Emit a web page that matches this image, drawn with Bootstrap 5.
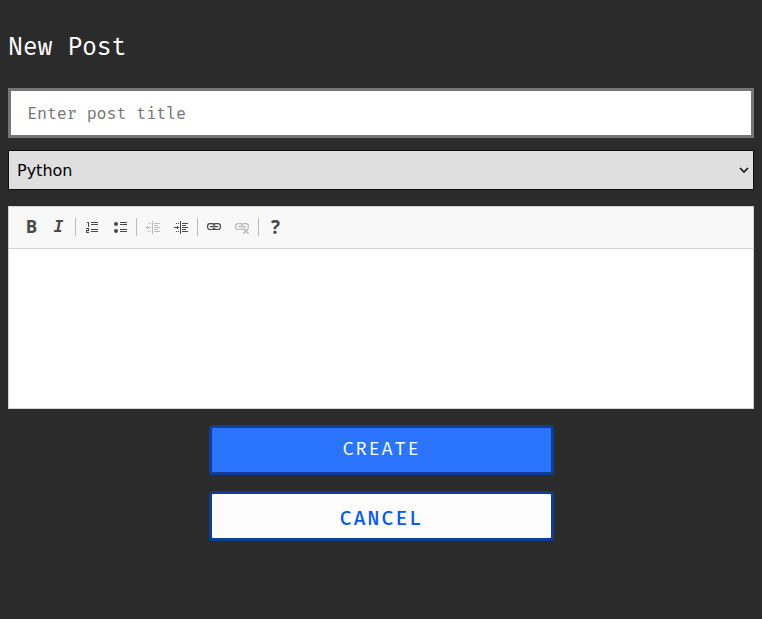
<!DOCTYPE html>
<html lang="en">
<head>
<meta charset="utf-8">
<meta name="viewport" content="width=device-width, initial-scale=1">
<title>New Post</title>
<link href="https://cdn.jsdelivr.net/npm/bootstrap@5.3.0/dist/css/bootstrap.min.css" rel="stylesheet">
<style>
body{background:#2b2b2b;font-family:"Fira Mono","Fira Code","DejaVu Sans Mono",monospace;overflow:hidden}
.page-title{font-size:25px;line-height:32px;letter-spacing:-.2px;margin:31px 0 25px;font-weight:400}
.post-title{height:50px;border:3px solid #767676;padding:0 16px;font-size:16.8px;letter-spacing:-.13px}
.post-title,.post-title:focus{background:#fff}
.post-title::placeholder{color:#757575}
.lang-select{height:40px;margin-top:12px;border:1px solid #0d0d0d;background-color:#dfdfdf;color:#000;font:16px "DejaVu Sans",sans-serif;padding:0 24px 0 8px;background-image:url("data:image/svg+xml,%3Csvg xmlns='http://www.w3.org/2000/svg' viewBox='0 0 10 6'%3E%3Cpath d='M1 1l4 4 4-4' fill='none' stroke='%23111' stroke-width='1.6'/%3E%3C/svg%3E");background-size:10px 6px;background-position:right 4px center}
.editor{margin-top:16px;height:203px;border:1px solid #d1d1d1}
.editor-bar{height:42px;background:#f8f8f8;border-bottom:1px solid #d1d1d1;padding:0 9px 2px}
.tool{width:28px;height:28px;color:#484848;background:none;border:0}
.tool.narrow{width:27px}
.tool svg{width:16px;height:16px;display:block}
.tool.off{opacity:.35}
.tool-sep{width:1px;height:18px;background:#bcbcbc;margin:0 2px}
.tool-sep.first{margin-left:3px}
.tool-b{font:bold 17px/16px "Open Sans",sans-serif}
.tool-i{font:italic bold 16px/16px "DejaVu Sans Mono",monospace}
.tool-q{font:bold 19px/18px "Open Sans",sans-serif;padding-left:1px!important}
.act{width:345px;height:50px;border:3px solid #0d3f98;border-radius:4px;padding:0;margin-left:1px;text-transform:uppercase}
.act-create,.act-create:hover{background:#2a74ff;color:#fff;border-color:#0d3f98;font-size:18.7px;letter-spacing:1.75px;padding-bottom:1px}
.act-cancel,.act-cancel:hover{background:#fdfdfd;color:#0458fb;border-color:#0d3f98;font-size:19.5px;letter-spacing:2.2px;font-weight:450;padding:6px 0 0}
</style>
</head>
<body>
<main class="px-2 pt-0 d-flex flex-column">
  <h1 class="page-title text-white">New Post</h1>
  <input class="form-control rounded-0 post-title" type="text" placeholder="Enter post title">
  <select class="form-select rounded-0 lang-select"><option>Python</option></select>
  <section class="editor bg-white">
    <div class="editor-bar d-flex align-items-center">
      <button class="tool narrow p-0 tool-b">B</button>
      <button class="tool narrow p-0 tool-i">I</button>
      <span class="tool-sep first"></span>
      <button class="tool p-0 d-flex align-items-center justify-content-center" aria-label="Numbered list"><svg viewBox="0 0 16 16" fill="currentColor" shape-rendering="crispEdges"><path d="M7 3h7v1H7zM7 5h7v1H7zM7 10h7v1H7zM7 12h7v1H7zM3 3h2v5H4V4H3zM2 9h3v3H3v1h2v1H2v-3h2v-1H2z"/></svg></button>
      <button class="tool p-0 d-flex align-items-center justify-content-center" aria-label="Bulleted list"><svg viewBox="0 0 16 16" fill="currentColor"><circle cx="4" cy="5" r="2"/><circle cx="4" cy="12" r="2"/><path d="M8 3h7v1H8zM8 5h7v1H8zM8 10h7v1H8zM8 12h7v1H8z"/></svg></button>
      <span class="tool-sep"></span>
      <button class="tool off p-0 d-flex align-items-center justify-content-center" aria-label="Decrease indent"><svg viewBox="0 0 16 16" fill="currentColor" shape-rendering="crispEdges"><path d="M7 2h1v13H7zM9 4h6v1H9zM9 6h4v1H9zM9 8h6v1H9zM9 10h4v1H9zM9 12h6v1H9zM3 4h1v1H3zM5 4h1v1H5zM3 12h1v1H3zM5 12h1v1H5zM1 8h5v1H1zM2 7h1v3H2z"/></svg></button>
      <button class="tool p-0 d-flex align-items-center justify-content-center" aria-label="Increase indent"><svg viewBox="0 0 16 16" fill="currentColor" shape-rendering="crispEdges"><path d="M7 2h1v13H7zM9 4h6v1H9zM9 6h4v1H9zM9 8h6v1H9zM9 10h4v1H9zM9 12h6v1H9zM3 4h1v1H3zM5 4h1v1H5zM3 12h1v1H3zM5 12h1v1H5zM1 8h5v1H1zM4 7h1v3H4z"/></svg></button>
      <span class="tool-sep"></span>
      <button class="tool p-0 d-flex align-items-center justify-content-center" aria-label="Link"><svg viewBox="0 0 16 16" fill="none" stroke="currentColor" stroke-width="1.2"><path d="M9 6.500Q8.600 4.700 6.600 4.700H4a2.500 2.500 0 0 0-2.400 2.500v1A2.500 2.500 0 0 0 4 10.500h2.600Q8.600 10.500 9 9M7 6.500Q7.400 4.700 9.400 4.700H12a2.500 2.500 0 0 1 2.400 2.500v1a2.500 2.500 0 0 1-2.400 2.300H9.400Q7.400 10.500 7 9M4 7.600h8"/></svg></button>
      <button class="tool off p-0 d-flex align-items-center justify-content-center" aria-label="Unlink"><svg viewBox="0 0 16 16" fill="none" stroke="currentColor" stroke-width="1.2"><path d="M9 6.500Q8.600 4.700 6.600 4.700H4a2.500 2.500 0 0 0-2.400 2.500v1A2.500 2.500 0 0 0 4 10.500h2.600Q8.600 10.500 9 9M7 6.500Q7.400 4.700 9.400 4.700H12a2.500 2.500 0 0 1 2.400 2.500v1.500M4 7.600h8"/><path stroke-width="1.700" d="M9.500 9.500l5 5m0-5-5 5"/></svg></button>
      <span class="tool-sep"></span>
      <button class="tool p-0 tool-q">?</button>
    </div>
  </section>
  <div class="d-flex flex-column align-items-center gap-3 mt-3">
    <button class="btn act act-create">Create</button>
    <button class="btn act act-cancel">Cancel</button>
  </div>
</main>
<script src="https://cdn.jsdelivr.net/npm/bootstrap@5.3.0/dist/js/bootstrap.bundle.min.js"></script>
</body>
</html>
